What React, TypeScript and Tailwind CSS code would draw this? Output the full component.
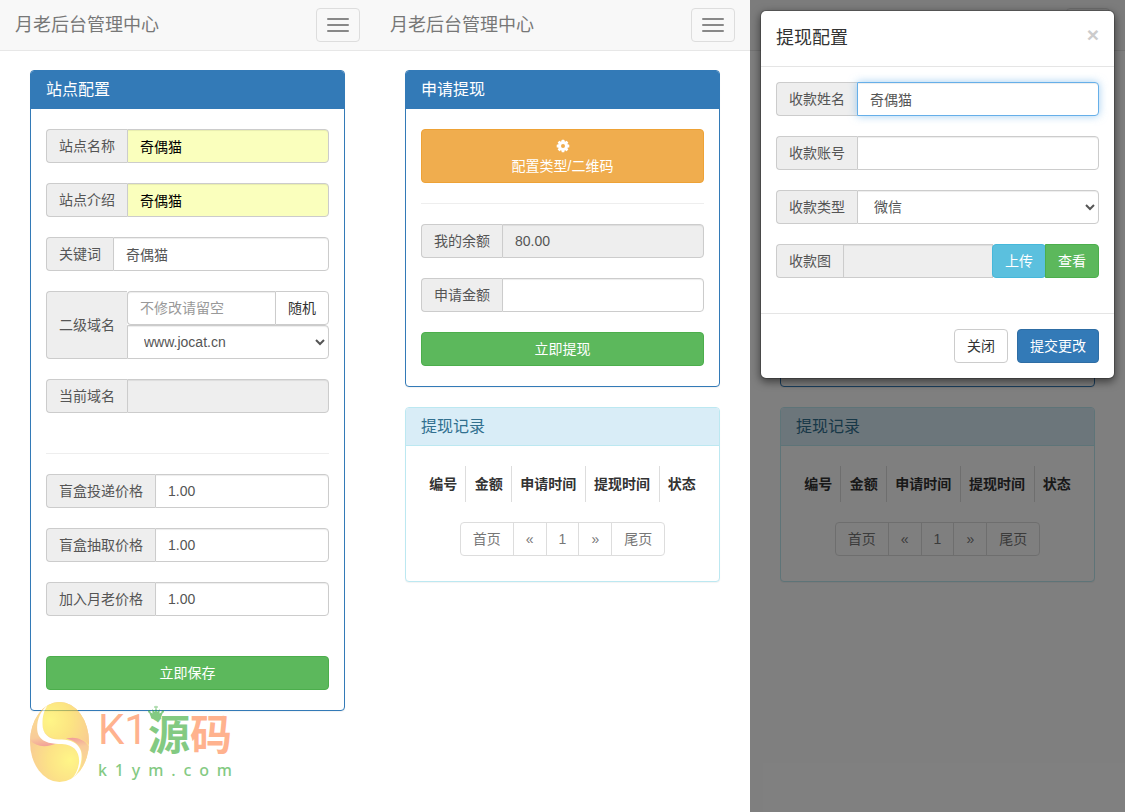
import React, { useId } from "react";
import clsx from "clsx";

const labelBase =
  "flex shrink-0 items-center rounded-l border border-r-0 border-[#ccc] bg-[#eee] px-3 text-sm text-[#555]";
const controlBase =
  "h-[34px] w-full min-w-0 flex-1 border px-3 text-sm outline-none placeholder:text-[#999]";
const inputBase = clsx(controlBase, "border-[#ccc] shadow-[inset_0_1px_1px_rgba(0,0,0,0.075)]");
const inputFocused = clsx(
  controlBase,
  "border-[#66afe9] shadow-[inset_0_1px_1px_rgba(0,0,0,0.075),0_0_8px_rgba(102,175,233,0.6)]"
);
const buttonBase = "rounded border px-3 py-[6px] text-sm leading-5";

type FieldProps = {
  label: string;
  value?: string;
  autofilled?: boolean;
  focused?: boolean;
  readOnly?: boolean;
};

function Field({ label, value = "", autofilled, focused, readOnly }: FieldProps) {
  const id = useId();
  return (
    <div className="flex">
      <label htmlFor={id} className={labelBase}>{label}</label>
      <input
        id={id}
        type="text"
        defaultValue={value}
        readOnly={readOnly}
        className={clsx(
          focused ? inputFocused : inputBase,
          "rounded-r",
          autofilled ? "bg-[#faffbd] text-black" : readOnly ? "bg-[#eee] text-[#555]" : "bg-white text-[#555]"
        )}
      />
    </div>
  );
}

function Navbar() {
  return (
    <header className="-mb-px flex h-[51px] items-center justify-between border-b border-[#e7e7e7] bg-[#f8f8f8] px-[15px]">
      <a href="#" className="text-lg leading-5 text-[#777]">月老后台管理中心</a>
      <button
        type="button"
        aria-label="菜单"
        className="flex h-[34px] w-11 flex-col items-center justify-center gap-1 rounded border border-[#ddd]"
      >
        <span className="h-[2px] w-[22px] rounded-[1px] bg-[#888]" />
        <span className="h-[2px] w-[22px] rounded-[1px] bg-[#888]" />
        <span className="h-[2px] w-[22px] rounded-[1px] bg-[#888]" />
      </button>
    </header>
  );
}

function Panel({ title, info, children }: { title: string; info?: boolean; children: React.ReactNode }) {
  return (
    <section
      className={clsx(
        "rounded border bg-white shadow-[0_1px_1px_rgba(0,0,0,0.05)]",
        info ? "border-[#bce8f1]" : "border-[#337ab7]"
      )}
    >
      <h3
        className={clsx(
          "flex h-[38px] items-center rounded-t-[3px] border-b px-[15px] text-base",
          info ? "border-[#bce8f1] bg-[#d9edf7] text-[#31708f]" : "border-[#337ab7] bg-[#337ab7] text-white"
        )}
      >
        {title}
      </h3>
      {children}
    </section>
  );
}

function CogIcon() {
  return (
    <svg viewBox="0 0 14 14" className="h-[14px] w-[14px]" fill="currentColor" aria-hidden="true">
      {[0, 45, 90, 135].map(angle => (
        <rect key={angle} x="5.6" y="0.7" width="2.8" height="12.6" rx="0.5" transform={`rotate(${angle} 7 7)`} />
      ))}
      <circle cx="7" cy="7" r="4.9" />
      <circle cx="7" cy="7" r="2" fill="#f0ad4e" />
    </svg>
  );
}

function Watermark() {
  return (
    <div className="pointer-events-none absolute top-full left-0 -mt-[9px] flex gap-2 opacity-60">
      <svg viewBox="0 0 60 80" className="h-20 w-[60px]" aria-hidden="true">
        <defs>
          <radialGradient id="egg-top" gradientUnits="userSpaceOnUse" cx="20" cy="18" r="42">
            <stop offset="0" stopColor="#fff038" />
            <stop offset="0.5" stopColor="#fbd430" />
            <stop offset="1" stopColor="#f6ae48" />
          </radialGradient>
          <radialGradient id="egg-bottom" gradientUnits="userSpaceOnUse" cx="40" cy="58" r="44">
            <stop offset="0" stopColor="#fff038" />
            <stop offset="0.5" stopColor="#fbd038" />
            <stop offset="1" stopColor="#f4a850" />
          </radialGradient>
          <linearGradient id="egg-left" gradientUnits="userSpaceOnUse" x1="10" y1="4" x2="16" y2="45">
            <stop offset="0" stopColor="#fbcc40" />
            <stop offset="0.75" stopColor="#f4aa58" />
            <stop offset="1" stopColor="#ea5a58" />
          </linearGradient>
          <linearGradient id="egg-right" gradientUnits="userSpaceOnUse" x1="44" y1="35" x2="50" y2="76">
            <stop offset="0" stopColor="#ea5a58" />
            <stop offset="0.25" stopColor="#f4aa58" />
            <stop offset="1" stopColor="#fbcc40" />
          </linearGradient>
          <clipPath id="egg-shape">
            <ellipse cx="29.5" cy="40" rx="29.5" ry="40" />
          </clipPath>
        </defs>
        <g clipPath="url(#egg-shape)">
          <rect width="60" height="80" fill="url(#egg-bottom)" />
          <path d="M17 0H60V44C54 36 44 35 33 37C20 38 12 32 12 22C12 12 15 6 17 0Z" fill="url(#egg-top)" />
          <path d="M17 3C8 12 6 28 10 34C14 40 20 41 28 41C16 46 6 45 0 38V0Z" fill="url(#egg-left)" />
          <path d="M36 36.500C46 34 55 37 60 46V80H42C52 68 54 56 51 48C48 41 43 38 36 36.500Z" fill="url(#egg-right)" />
          <path
            d="M18 3C7 11 5 27 9 34C13 41 23 42 32 42C44 42.500 50 50 49 61C48 68 45 73 42 77C50 70 53 57 51 49C48 40 39 37 30 37.500C19 38 12.500 32 12.500 22C12.500 14 14 8 18 3Z"
            fill="#fff"
          />
        </g>
      </svg>
      <div className="relative w-[134px]">
        <div className="flex h-[56px] items-start justify-between whitespace-nowrap text-[#ff8044]">
          <span className="font-[Roboto] text-[42px] leading-[56px]">K1</span>
          <span className="font-['Noto_Sans_CJK_SC'] text-[42px] leading-[60px] font-bold">
            <span className="text-[#32a730]">源</span>码
          </span>
        </div>
        <svg viewBox="0 0 16 16" className="absolute top-[2px] left-[50px] h-4 w-4" fill="#32a730" aria-hidden="true">
          <path d="M3.500 14.500L0.500 7L4.500 9.500L4.200 5L7 8L8 1L9 8L11.800 5L11.500 9.500L15.500 7L12.500 14.500Q8 16 3.500 14.500Z" />
          <path d="M6 2.500H10V3.500H6Z" />
          <circle cx="1.200" cy="7.500" r="1.200" />
          <circle cx="14.800" cy="7.500" r="1.200" />
        </svg>
        <div className="flex justify-between font-['Noto_Sans'] text-base leading-6 font-medium text-[#32a730]">
          {"k1ym.com".split("").map((char, i) => (
            <span key={i}>{char}</span>
          ))}
        </div>
      </div>
    </div>
  );
}

function SiteConfigPage() {
  return (
    <div>
      <Navbar />
      <main className="px-[30px] pt-5">
        <div className="relative">
          <Panel title="站点配置">
            <form className="flex flex-col gap-5 px-[15px] py-5">
              <Field label="站点名称" value="奇偶猫" autofilled />
              <Field label="站点介绍" value="奇偶猫" autofilled />
              <Field label="关键词" value="奇偶猫" />
              <div className="flex">
                <label htmlFor="subdomain" className={labelBase}>二级域名</label>
                <div className="min-w-0 flex-1">
                  <div className="flex">
                    <input
                      id="subdomain"
                      type="text"
                      placeholder="不修改请留空"
                      className={clsx(inputBase, "rounded-l border-r-0 bg-white text-[#555]")}
                    />
                    <button type="button" className={clsx(buttonBase, "shrink-0 rounded-l-none border-[#ccc] bg-white text-[#333]")}>
                      随机
                    </button>
                  </div>
                  <select aria-label="域名后缀" className={clsx(inputBase, "rounded-r bg-white text-[#555]")}>
                    <option>www.jocat.cn</option>
                  </select>
                </div>
              </div>
              <Field label="当前域名" readOnly />
              <hr className="mt-5 border-[#eee]" />
              <Field label="盲盒投递价格" value="1.00" />
              <Field label="盲盒抽取价格" value="1.00" />
              <Field label="加入月老价格" value="1.00" />
              <button type="button" className={clsx(buttonBase, "mt-5 border-[#4cae4c] bg-[#5cb85c] text-white")}>
                立即保存
              </button>
            </form>
          </Panel>
          <Watermark />
        </div>
      </main>
    </div>
  );
}

const columns = ["编号", "金额", "申请时间", "提现时间", "状态"];
const pages = ["首页", "«", "1", "»", "尾页"];

function WithdrawPage() {
  return (
    <div>
      <Navbar />
      <main className="flex flex-col gap-5 px-[30px] pt-5">
        <Panel title="申请提现">
          <form className="flex flex-col gap-5 px-[15px] py-5">
            <button
              type="button"
              className={clsx(buttonBase, "flex flex-col items-center border-[#eea236] bg-[#f0ad4e] text-white")}
            >
              <span className="flex h-5 items-center"><CogIcon /></span>
              配置类型/二维码
            </button>
            <hr className="border-[#eee]" />
            <Field label="我的余额" value="80.00" readOnly />
            <Field label="申请金额" />
            <button type="button" className={clsx(buttonBase, "border-[#4cae4c] bg-[#5cb85c] text-white")}>
              立即提现
            </button>
          </form>
        </Panel>
        <Panel title="提现记录" info>
          <div className="px-[15px] pt-5 pb-[25px]">
            <table className="w-full text-center text-sm text-[#333]">
              <thead>
                <tr>
                  {columns.map(name => (
                    <th key={name} className="border-r border-[#ddd] p-2 leading-5 font-bold whitespace-nowrap last:border-r-0">
                      {name}
                    </th>
                  ))}
                </tr>
              </thead>
            </table>
            <nav className="mt-5 flex justify-center">
              {pages.map(page => (
                <a
                  key={page}
                  href="#"
                  className="-ml-px border border-[#ddd] bg-white px-3 py-[6px] text-sm leading-5 text-[#777] first:ml-0 first:rounded-l last:rounded-r"
                >
                  {page}
                </a>
              ))}
            </nav>
          </div>
        </Panel>
      </main>
    </div>
  );
}

function WithdrawModal() {
  return (
    <div
      role="dialog"
      aria-label="提现配置"
      className="absolute inset-x-[10px] top-[10px] rounded-md border border-black/20 bg-white bg-clip-padding shadow-[0_3px_9px_rgba(0,0,0,0.5)]"
    >
      <div className="flex items-start justify-between border-b border-[#e5e5e5] p-[15px]">
        <h4 className="text-lg leading-[25px] text-[#333]">提现配置</h4>
        <button type="button" aria-label="关闭" className="text-[21px] leading-[18px] font-bold text-[#ccc]">×</button>
      </div>
      <div className="flex flex-col gap-5 px-[15px] pt-[15px] pb-[35px]">
        <Field label="收款姓名" value="奇偶猫" focused />
        <Field label="收款账号" />
        <div className="flex">
          <label htmlFor="pay-type" className={labelBase}>收款类型</label>
          <select id="pay-type" className={clsx(inputBase, "rounded-r bg-white text-[#555]")}>
            <option>微信</option>
          </select>
        </div>
        <div className="flex">
          <label htmlFor="pay-image" className={labelBase}>收款图</label>
          <input id="pay-image" type="text" readOnly className={clsx(inputBase, "bg-[#eee] text-[#555]")} />
          <button type="button" className={clsx(buttonBase, "-ml-px shrink-0 border-[#46b8da] bg-[#5bc0de] text-white")}>
            上传
          </button>
          <button
            type="button"
            className={clsx(buttonBase, "-ml-px shrink-0 rounded-l-none border-[#4cae4c] bg-[#5cb85c] text-white")}
          >
            查看
          </button>
        </div>
      </div>
      <div className="flex justify-end gap-[9px] border-t border-[#e5e5e5] p-[15px]">
        <button type="button" className={clsx(buttonBase, "border-[#ccc] bg-white text-[#333]")}>关闭</button>
        <button type="button" className={clsx(buttonBase, "border-[#2e6da4] bg-[#337ab7] text-white")}>提交更改</button>
      </div>
    </div>
  );
}

export default function App() {
  return (
    <div className="grid min-h-screen grid-cols-3 bg-white font-['Liberation_Sans','Noto_Sans_CJK_SC',sans-serif]">
      <SiteConfigPage />
      <WithdrawPage />
      <div className="relative">
        <WithdrawPage />
        <div className="absolute inset-0 bg-black/50" />
        <WithdrawModal />
      </div>
    </div>
  );
}
